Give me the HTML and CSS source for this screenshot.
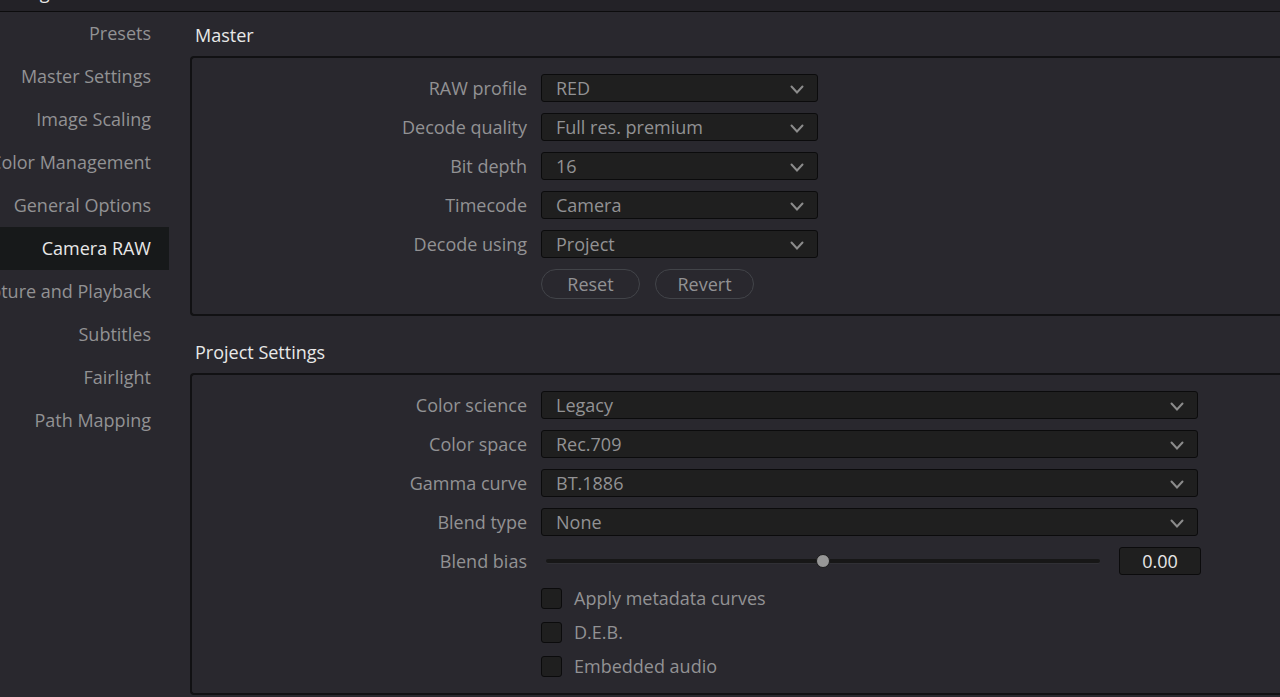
FILE: index.html
```html
<!DOCTYPE html>
<html lang="en">
<head>
    <meta charset="UTF-8">
    <meta name="viewport" content="width=device-width, initial-scale=1.0">
    <title>Project Settings - Camera RAW</title>
    <link rel="stylesheet" href="styles.css">
</head>
<body>
    <header class="titlebar">
        <span class="titlebar-text">Settings</span>
    </header>
    <div class="layout">
        <nav class="sidebar">
            <a href="#presets">Presets</a>
            <a href="#master-settings">Master Settings</a>
            <a href="#image-scaling">Image Scaling</a>
            <a href="#color-management">Color Management</a>
            <a href="#general-options">General Options</a>
            <a href="#camera-raw" class="active">Camera RAW</a>
            <a href="#capture">Capture and Playback</a>
            <a href="#subtitles">Subtitles</a>
            <a href="#fairlight">Fairlight</a>
            <a href="#path-mapping">Path Mapping</a>
        </nav>
        <main class="content">
            <h2>Master</h2>
            <section class="panel master">
                <div class="row">
                    <label for="rawProfile">RAW profile</label>
                    <div class="select">
                        <select id="rawProfile"><option>RED</option></select>
                        <svg class="chevron" viewBox="0 0 14 10"><path d="M1.5 1.5 7 7.5 12.5 1.5"/></svg>
                    </div>
                </div>
                <div class="row">
                    <label for="decodeQuality">Decode quality</label>
                    <div class="select">
                        <select id="decodeQuality"><option>Full res. premium</option></select>
                        <svg class="chevron" viewBox="0 0 14 10"><path d="M1.5 1.5 7 7.5 12.5 1.5"/></svg>
                    </div>
                </div>
                <div class="row">
                    <label for="bitDepth">Bit depth</label>
                    <div class="select">
                        <select id="bitDepth"><option>16</option></select>
                        <svg class="chevron" viewBox="0 0 14 10"><path d="M1.5 1.5 7 7.5 12.5 1.5"/></svg>
                    </div>
                </div>
                <div class="row">
                    <label for="timecode">Timecode</label>
                    <div class="select">
                        <select id="timecode"><option>Camera</option></select>
                        <svg class="chevron" viewBox="0 0 14 10"><path d="M1.5 1.5 7 7.5 12.5 1.5"/></svg>
                    </div>
                </div>
                <div class="row">
                    <label for="decodeUsing">Decode using</label>
                    <div class="select">
                        <select id="decodeUsing"><option>Project</option></select>
                        <svg class="chevron" viewBox="0 0 14 10"><path d="M1.5 1.5 7 7.5 12.5 1.5"/></svg>
                    </div>
                </div>
                <div class="buttons">
                    <button type="button">Reset</button>
                    <button type="button">Revert</button>
                </div>
            </section>

            <h2 class="spaced">Project Settings</h2>
            <section class="panel project">
                <div class="row">
                    <label for="colorScience">Color science</label>
                    <div class="select">
                        <select id="colorScience"><option>Legacy</option></select>
                        <svg class="chevron" viewBox="0 0 14 10"><path d="M1.5 1.5 7 7.5 12.5 1.5"/></svg>
                    </div>
                </div>
                <div class="row">
                    <label for="colorSpace">Color space</label>
                    <div class="select">
                        <select id="colorSpace"><option>Rec.709</option></select>
                        <svg class="chevron" viewBox="0 0 14 10"><path d="M1.5 1.5 7 7.5 12.5 1.5"/></svg>
                    </div>
                </div>
                <div class="row">
                    <label for="gammaCurve">Gamma curve</label>
                    <div class="select">
                        <select id="gammaCurve"><option>BT.1886</option></select>
                        <svg class="chevron" viewBox="0 0 14 10"><path d="M1.5 1.5 7 7.5 12.5 1.5"/></svg>
                    </div>
                </div>
                <div class="row">
                    <label for="blendType">Blend type</label>
                    <div class="select">
                        <select id="blendType"><option>None</option></select>
                        <svg class="chevron" viewBox="0 0 14 10"><path d="M1.5 1.5 7 7.5 12.5 1.5"/></svg>
                    </div>
                </div>
                <div class="row">
                    <label for="blendBias">Blend bias</label>
                    <div class="slider">
                        <input type="range" id="blendBias" min="-1" max="1" step="0.01" value="0">
                        <input type="text" id="blendValue" value="0.00" aria-label="Blend bias value">
                    </div>
                </div>
                <div class="checks">
                    <label><input type="checkbox"> Apply metadata curves</label>
                    <label><input type="checkbox"> D.E.B.</label>
                    <label><input type="checkbox"> Embedded audio</label>
                </div>
            </section>
        </main>
    </div>

    <script>
        const bias = document.getElementById('blendBias');
        const biasValue = document.getElementById('blendValue');
        bias.addEventListener('input', function () {
            biasValue.value = Number(bias.value).toFixed(2);
        });
    </script>
</body>
</html>
```

FILE: styles.css
```css
:root {
    --bg: #29282e;
    --line: #111113;
    --field: #1f1f1f;
    --text: #929294;
    --bright: #e8e8e8;
}
* {
    box-sizing: border-box;
}
body {
    margin: 0;
    background-color: var(--bg);
    color: var(--text);
    font-family: 'Open Sans', 'Noto Sans', sans-serif;
    font-size: 18px;
    line-height: 24px;
    overflow-x: hidden;
}
input, select, button {
    font: inherit;
    color: inherit;
}

/* Title bar */
.titlebar {
    display: flex;
    align-items: flex-end;
    height: 12px;
    padding-bottom: 7px;
    border-bottom: 1px solid #0c0c0d;
    background-color: #232227;
    overflow: hidden;
}
.titlebar-text {
    display: flex;
    justify-content: flex-end;
    width: 58px;
    color: var(--bright);
}

.layout {
    display: flex;
}

/* Sidebar */
.sidebar {
    flex: none;
    width: 169px;
    overflow: hidden;
}
.sidebar a {
    display: flex;
    justify-content: flex-end;
    padding: 9px 18px 10px 0;
    color: var(--text);
    text-decoration: none;
    white-space: nowrap;
}
.sidebar a.active {
    background-color: #17191a;
    color: var(--bright);
}

/* Settings */
.content {
    flex: 1;
    min-width: 0;
    margin-left: 21px;
}
h2 {
    margin: 0;
    padding: 11px 5px 9px;
    color: var(--bright);
    font-size: 18px;
    font-weight: 400;
}
h2.spaced {
    padding-top: 24px;
}
.panel {
    display: flex;
    flex-direction: column;
    gap: 11px;
    padding: 16px 0 15px;
    border: 2px solid var(--line);
    border-right: none;
    border-radius: 4px 0 0 4px;
}
.row {
    display: grid;
    grid-template-columns: 335px 1fr;
    column-gap: 14px;
    align-items: center;
}
.row > label {
    text-align: right;
}
.select {
    display: grid;
    align-items: center;
}
.master .select {
    width: 277px;
}
.project .select {
    margin-right: 82px;
}
select {
    grid-area: 1 / 1;
    appearance: none;
    width: 100%;
    height: 28px;
    padding: 0 32px 0 14px;
    background-color: var(--field);
    border: 1px solid #0b0b0c;
    border-radius: 3px;
}
.chevron {
    grid-area: 1 / 1;
    justify-self: end;
    width: 14px;
    height: 10px;
    margin: 4px 14px 0 0;
    fill: none;
    stroke: #8c8c8c;
    stroke-width: 2;
    stroke-linecap: round;
    pointer-events: none;
}
.buttons {
    display: flex;
    gap: 15px;
    padding-left: 349px;
}
button {
    width: 99px;
    height: 30px;
    padding: 0;
    background: none;
    border: 1px solid #424449;
    border-radius: 15px;
}
.slider {
    display: flex;
    align-items: center;
    gap: 19px;
    margin-right: 79px;
}
input[type="range"] {
    appearance: none;
    flex: 1;
    min-width: 0;
    height: 14px;
    margin: 0 0 0 5px;
    background: none;
}
input[type="range"]::-webkit-slider-runnable-track {
    height: 4px;
    background-color: #171717;
    border-radius: 2px;
    box-shadow: 0 1px 0 #303035;
}
input[type="range"]::-webkit-slider-thumb {
    appearance: none;
    width: 14px;
    height: 14px;
    margin-top: -5px;
    background-color: #979797;
    border: 1px solid #1b1b1c;
    border-radius: 50%;
}
input[type="text"] {
    width: 82px;
    height: 28px;
    padding: 0;
    background-color: var(--field);
    border: 1px solid #0b0b0c;
    border-radius: 3px;
    color: var(--bright);
    text-align: center;
}
.checks {
    display: flex;
    flex-direction: column;
    align-items: flex-start;
    gap: 10px;
    padding-left: 349px;
}
.checks label {
    display: flex;
    align-items: center;
    gap: 12px;
}
input[type="checkbox"] {
    appearance: none;
    width: 21px;
    height: 21px;
    margin: 0;
    background-color: var(--field);
    border: 1px solid #0b0b0c;
    border-radius: 3px;
}
input[type="checkbox"]:checked {
    background-color: #8c8c8c;
}
```
